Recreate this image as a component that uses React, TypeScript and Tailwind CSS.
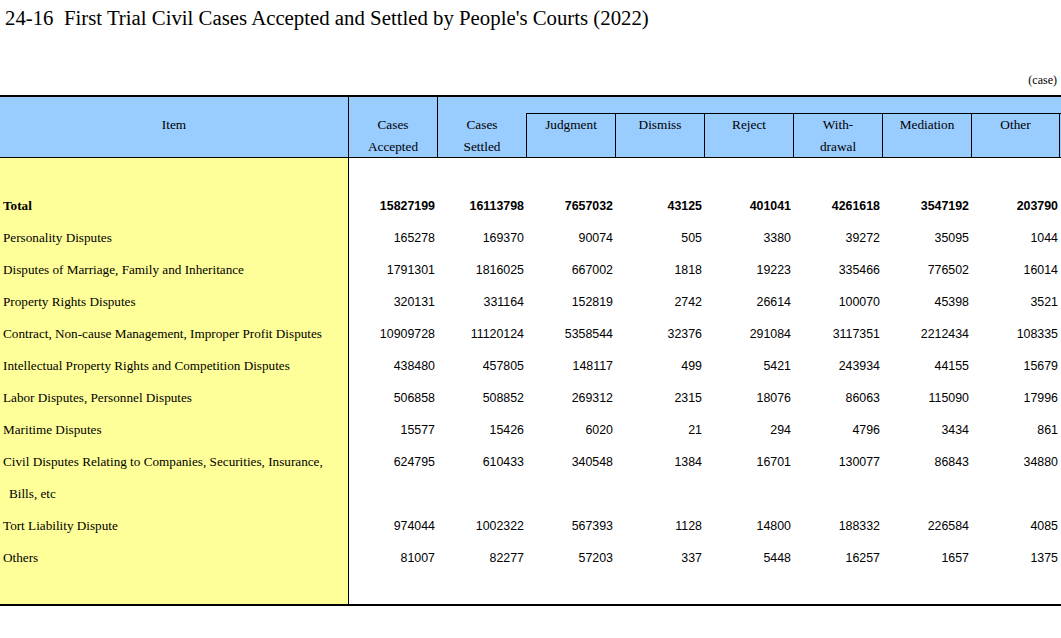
import React from "react";

const rows: { label: string; vals: string[]; bold?: boolean; indent?: boolean }[] = [
  { label: "Total", bold: true, vals: ["15827199", "16113798", "7657032", "43125", "401041", "4261618", "3547192", "203790"] },
  { label: "Personality Disputes", vals: ["165278", "169370", "90074", "505", "3380", "39272", "35095", "1044"] },
  { label: "Disputes of Marriage, Family and Inheritance", vals: ["1791301", "1816025", "667002", "1818", "19223", "335466", "776502", "16014"] },
  { label: "Property Rights Disputes", vals: ["320131", "331164", "152819", "2742", "26614", "100070", "45398", "3521"] },
  { label: "Contract, Non-cause Management, Improper Profit Disputes", vals: ["10909728", "11120124", "5358544", "32376", "291084", "3117351", "2212434", "108335"] },
  { label: "Intellectual Property Rights and Competition Disputes", vals: ["438480", "457805", "148117", "499", "5421", "243934", "44155", "15679"] },
  { label: "Labor Disputes, Personnel Disputes", vals: ["506858", "508852", "269312", "2315", "18076", "86063", "115090", "17996"] },
  { label: "Maritime Disputes", vals: ["15577", "15426", "6020", "21", "294", "4796", "3434", "861"] },
  { label: "Civil Disputes Relating to Companies, Securities, Insurance,", vals: ["624795", "610433", "340548", "1384", "16701", "130077", "86843", "34880"] },
  { label: "Bills, etc", indent: true, vals: ["", "", "", "", "", "", "", ""] },
  { label: "Tort Liability Dispute", vals: ["974044", "1002322", "567393", "1128", "14800", "188332", "226584", "4085"] },
  { label: "Others", vals: ["81007", "82277", "57203", "337", "5448", "16257", "1657", "1375"] },
];

const serif = "font-['Liberation_Serif','Times_New_Roman',serif]";
const sans = "font-['Liberation_Sans',Arial,sans-serif]";

const subHeads: [string, string][] = [
  ["Judgment", ""],
  ["Dismiss", ""],
  ["Reject", ""],
  ["With-", "drawal"],
  ["Mediation", ""],
  ["Other", ""],
];

export default function App() {
  return (
    <div className={`w-[1061px] h-[638px] bg-white text-black ${serif}`}>
      <div className="pl-[5px] pt-[6px] text-[20.8px] leading-[24px]">
        24-16&nbsp;&nbsp;First Trial Civil Cases Accepted and Settled by People's Courts (2022)
      </div>
      <div className="mt-[42px] pr-[4px] text-right text-[12px] leading-[16px]">(case)</div>
      <div className="mt-[7px] w-[1061px] border-t-2 border-b-2 border-black">
        {/* header */}
        <div className="flex h-[61px] bg-[#99ccff] border-b border-black text-[13.3px] leading-[22px]">
          <div className="w-[348px] shrink-0 pt-[17px] text-center">Item</div>
          <div className="w-[89px] shrink-0 border-l border-black pt-[17px] text-center">
            Cases
            <br />
            Accepted
          </div>
          <div className="w-[89px] shrink-0 border-l border-black pt-[17px] text-center">
            Cases
            <br />
            Settled
          </div>
          <div className="flex w-[535px] shrink-0 flex-col">
            <div className="h-[16px] shrink-0" />
            <div className="flex min-h-0 flex-1 border-t border-black">
              {subHeads.map(([a, b], i) => (
                <div
                  key={a}
                  className={`w-[89px] shrink-0 border-l border-black text-center ${i === 5 ? "border-r" : ""}`}
                >
                  {a}
                  {b && <br />}
                  {b}
                </div>
              ))}
            </div>
          </div>
        </div>
        {/* body */}
        <div className="flex h-[446px]">
          <div className="w-[348px] shrink-0 bg-[#ffff99] pt-[32px] text-[13.2px]">
            {rows.map((r) => (
              <div
                key={r.label}
                className={`flex h-[32px] items-center whitespace-nowrap ${r.indent ? "pl-[9px]" : "pl-[3px]"} ${r.bold ? "font-bold" : ""}`}
              >
                {r.label}
              </div>
            ))}
          </div>
          <div className={`w-[713px] border-l border-black pt-[32px] text-[12.4px] ${sans}`}>
            {rows.map((r) => (
              <div key={r.label} className={`flex h-[32px] items-center ${r.bold ? "font-bold" : ""}`}>
                {r.vals.map((v, i) => (
                  <div key={i} className={`${i === 0 ? "w-[88px]" : "w-[89px]"} shrink-0 pr-[2px] text-right`}>
                    {v}
                  </div>
                ))}
              </div>
            ))}
          </div>
        </div>
      </div>
    </div>
  );
}
